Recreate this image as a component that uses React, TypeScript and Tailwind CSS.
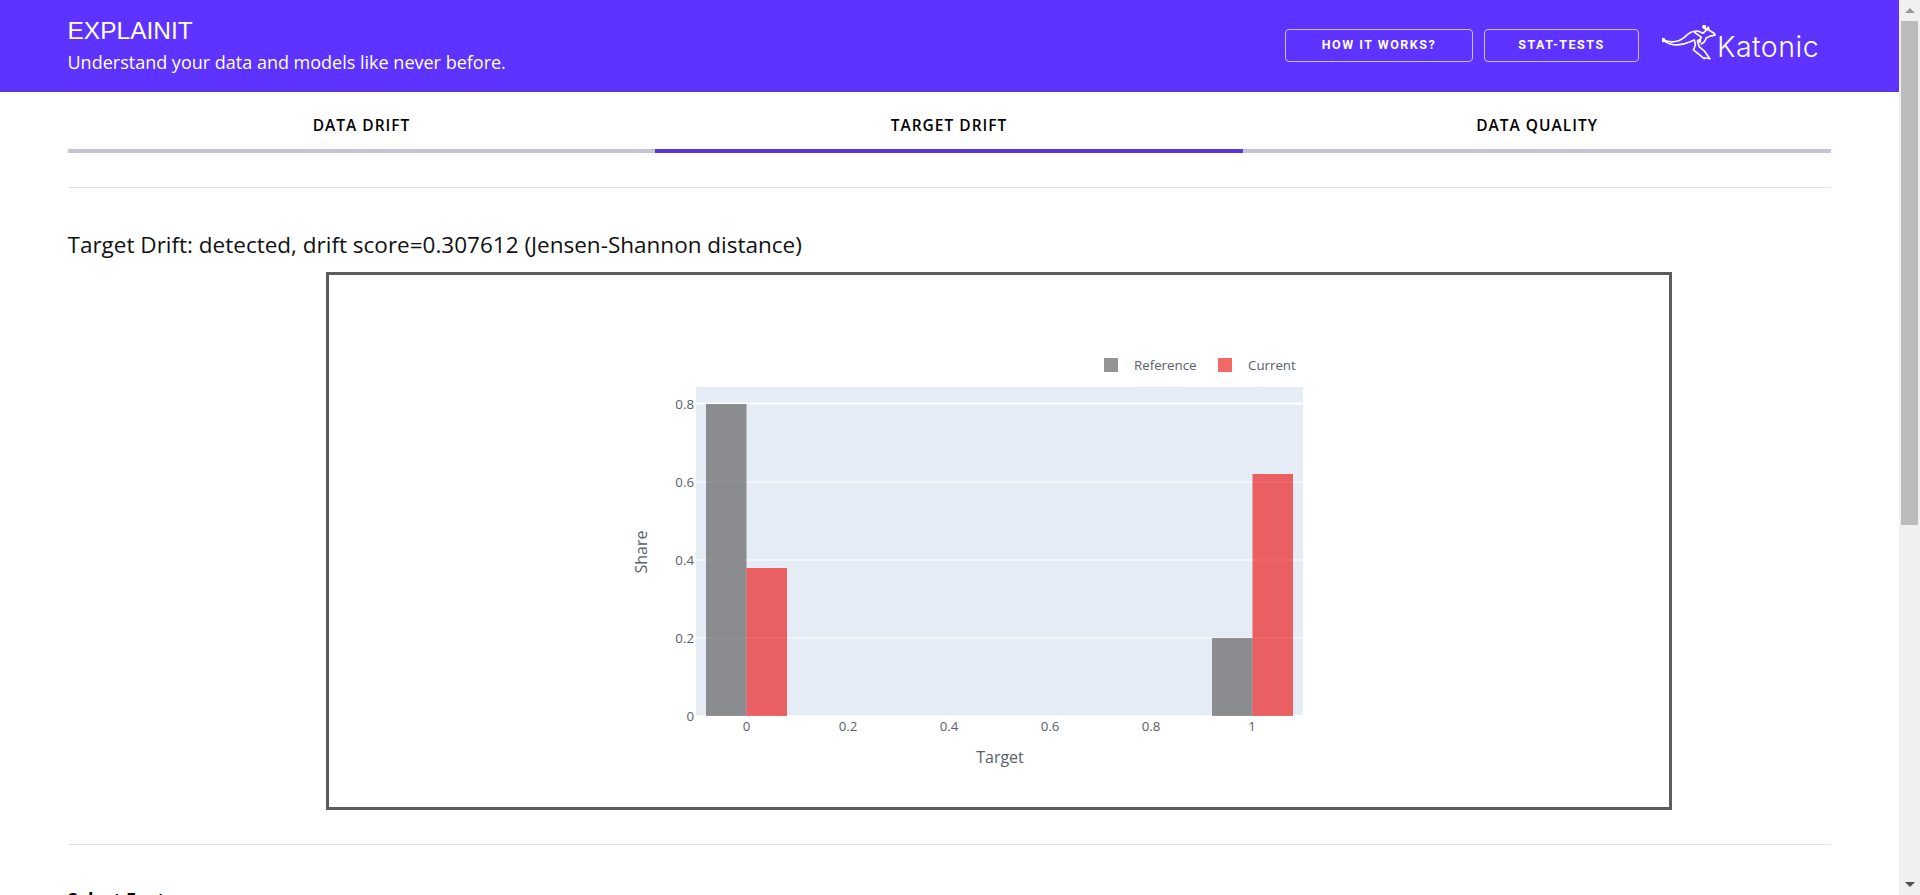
const font = "[font-family:'Open_Sans',sans-serif]";

const gridLines = [
  { y: 403.5, w: 2 },
  { y: 482, w: 1 },
  { y: 560, w: 1 },
  { y: 638, w: 1 },
];
const yTicks = [
  { label: "0.8", y: 404 },
  { label: "0.6", y: 482 },
  { label: "0.4", y: 560 },
  { label: "0.2", y: 638 },
  { label: "0", y: 716 },
];
const xTicks = [
  { label: "0", x: 746.5 },
  { label: "0.2", x: 848 },
  { label: "0.4", x: 949 },
  { label: "0.6", x: 1050 },
  { label: "0.8", x: 1151 },
  { label: "1", x: 1252 },
];

// svg origin is the top-left of the box's inner area (329, 275)
const DriftChart = () => (
  <svg width="1340" height="532" viewBox="329 275 1340 532" className="block">
    <g fontFamily="'Open Sans', sans-serif" fill="#59606c" fontSize="13.3">
      <rect x="696" y="387" width="607" height="328" fill="#e5ecf6" />
      {gridLines.map((g) => (
        <rect key={g.y} x="696" y={g.y - g.w / 2} width="607" height={g.w} fill="#fff" />
      ))}
      <rect x="706" y="404" width="40.5" height="312" fill="#4d4d4d" fillOpacity="0.6" />
      <rect x="746.5" y="568" width="40.5" height="148" fill="#ed0400" fillOpacity="0.6" />
      <rect x="1212" y="638" width="40.5" height="78" fill="#4d4d4d" fillOpacity="0.6" />
      <rect x="1252.5" y="474" width="40.5" height="242" fill="#ed0400" fillOpacity="0.6" />
      {yTicks.map((t) => (
        <text key={t.label} x="694" y={t.y + 4.5} textAnchor="end">
          {t.label}
        </text>
      ))}
      {xTicks.map((t) => (
        <text key={t.label} x={t.x} y="731" textAnchor="middle">
          {t.label}
        </text>
      ))}
      <text x="1000" y="763" textAnchor="middle" fontSize="16">
        Target
      </text>
      <text x="647" y="552" textAnchor="middle" fontSize="16" transform="rotate(-90 647 552)">
        Share
      </text>
      <rect x="1104" y="358" width="14" height="14" fill="#4d4d4d" fillOpacity="0.6" />
      <text x="1134" y="370">Reference</text>
      <rect x="1218" y="358" width="14" height="14" fill="#ed0400" fillOpacity="0.6" />
      <text x="1248" y="370">Current</text>
    </g>
  </svg>
);

const KatonicLogo = () => (
  <div className="flex items-end w-[158px] h-[36px]">
    <svg
      width="55"
      height="36"
      viewBox="0 0 56 36"
      fill="none"
      stroke="#fff"
      strokeWidth="1.7"
      strokeLinecap="round"
      strokeLinejoin="round"
      className="shrink-0">
      <path d="M1 15c8 3 16 2 22-3 4-4 9-7 14-6l5 2 3-3 2-3 1 3 5 3 1 2-5 1-4 2-2 4-3 2" />
      <path d="M1 15c8 6 18 6 27 2l5-2 1 5-2 5 5 4 6 5" />
      <path d="M36 16l2 6 5 4 5 7M43 33l6 1" />
      <path d="M33 7l7 5-2 4M42 2l4 3" />
      <circle cx="1.5" cy="15" r="1.3" fill="#fff" />
      <circle cx="43" cy="1.5" r="1.2" fill="#fff" />
      <circle cx="38" cy="16" r="1.2" fill="#fff" />
    </svg>
    <span className="mb-[2px] font-['Inter',sans-serif] font-[350] text-[28.5px] leading-[24px] tracking-[0.5px] text-white">
      Katonic
    </span>
  </div>
);

const TopBar = () => (
  <header className="h-[92px] bg-[#5e32ff] border-b border-[#5a3cc8] flex items-start justify-between pl-[67.5px] pr-[79px]">
    <div className="pt-[16px] text-white">
      <h1 className="font-['Liberation_Sans',sans-serif] text-[24.5px] leading-[30px]">EXPLAINIT</h1>
      <p className={`${font} text-[18px] leading-[26px] mt-[3px]`}>
        Understand your data and models like never before.
      </p>
    </div>
    <div className="flex items-start pt-[29px]">
      <button className="w-[188px] h-[33px] border border-[#c9c2f5] rounded-[4px] text-white font-['Roboto',sans-serif] font-bold text-[12.5px] tracking-[1.5px]">
        HOW IT WORKS?
      </button>
      <button className="w-[155px] h-[33px] ml-[11px] border border-[#c9c2f5] rounded-[4px] text-white font-['Roboto',sans-serif] font-bold text-[12.5px] tracking-[1.5px]">
        STAT-TESTS
      </button>
      <div className="ml-[23px] mt-[-4px]">
        <KatonicLogo />
      </div>
    </div>
  </header>
);

const tabs = [
  { label: "DATA DRIFT", active: false },
  { label: "TARGET DRIFT", active: true },
  { label: "DATA QUALITY", active: false },
];

const App = () => {
  return (
    <div className="flex h-[895px] overflow-hidden bg-white">
      <div className="flex-1 min-w-0">
        <TopBar />
        <div className="px-[68px]">
          <div className="grid grid-cols-[587px_588px_1fr]">
            {tabs.map((tab) => (
              <div
                key={tab.label}
                className={`h-[61px] pt-[22px] text-center border-b-4 ${font} font-[550] text-[15.5px] leading-[22px] tracking-[1px] text-black ${
                  tab.active ? "border-[#5b35dc]" : "border-[#c1c5d6]"
                }`}>
                {tab.label}
              </div>
            ))}
          </div>
          <hr className="mt-[34px] border-t border-[#e1e1e1]" />
          <h2 className={`${font} ml-[-0.5px] mt-[42px] text-[22.5px] leading-[30px] text-[#111]`}>
            Target Drift: detected, drift score=0.307612 (Jensen-Shannon distance)
          </h2>
          <div className="ml-[258px] mt-[12px] w-[1346px] h-[538px] border-[3px] border-[#5c5c5c]">
            <DriftChart />
          </div>
          <hr className="mt-[34px] border-t border-[#e1e1e1]" />
          <h3 className={`${font} ml-[-0.5px] mt-[41px] font-bold text-[18px] leading-[26px] text-black`}>
            Select Feature
          </h3>
        </div>
      </div>
      {/* page scrollbar */}
      <div className="w-[21px] shrink-0 bg-[#f0f0f0] flex flex-col items-center justify-between">
        <div className="w-full">
          <div className="h-[21px] flex items-center justify-center">
            <div className="w-0 h-0 border-x-[5px] border-x-transparent border-b-[5px] border-b-[#999]" />
          </div>
          <div className="mx-auto w-[17px] h-[504px] bg-[#bcbcbc]" />
        </div>
        <div className="h-[21px] flex items-center justify-center">
          <div className="w-0 h-0 border-x-[5px] border-x-transparent border-t-[5px] border-t-[#505050]" />
        </div>
      </div>
    </div>
  );
};

export default App;
